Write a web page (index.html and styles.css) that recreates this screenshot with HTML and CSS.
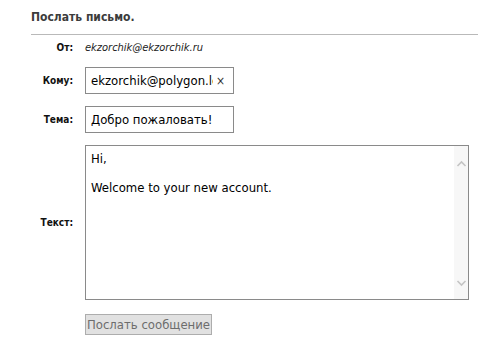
FILE: index.html
```html
<!DOCTYPE html>
<html lang="ru">
<head>
<meta charset="utf-8">
<title>Послать письмо</title>
<link rel="stylesheet" href="styles.css">
</head>
<body>
<div class="page">
  <h1 class="title">Послать письмо.</h1>
  <form class="form">
    <div class="label label-from">От:</div>
    <div class="value-from">ekzorchik@ekzorchik.ru</div>

    <label class="label">Кому:</label>
    <div class="field">
      <input class="input" type="text" value="ekzorchik@polygon.local">
      <span class="clear">×</span>
    </div>

    <label class="label">Тема:</label>
    <div class="field">
      <input class="input" type="text" value="Добро пожаловать!">
    </div>

    <label class="label">Текст:</label>
    <div class="area">
      <textarea class="textarea">Hi,

Welcome to your new account.</textarea>
      <div class="scrollbar">
        <svg class="chev" width="13" height="10" viewBox="0 0 13 10"><path d="M2.5 7 L6.5 3 L10.5 7" fill="none" stroke="#c4c4c4" stroke-width="1.6"/></svg>
        <svg class="chev" width="13" height="10" viewBox="0 0 13 10"><path d="M2.5 3 L6.5 7 L10.5 3" fill="none" stroke="#c4c4c4" stroke-width="1.6"/></svg>
      </div>
    </div>

    <div></div>
    <div class="actions">
      <button class="button" type="button" disabled>Послать сообщение</button>
    </div>
  </form>
</div>
</body>
</html>
```

FILE: styles.css
```css
* { box-sizing: border-box; }
html, body { margin: 0; padding: 0; background: #fff; }
body {
  font-family: "DejaVu Sans Condensed", "DejaVu Sans", Verdana, sans-serif;
  color: #000;
}
.page {
  padding: 11px 1px 0 31px;
}
.title {
  margin: 0;
  font-size: 12px;
  font-weight: bold;
  color: #3c3c3c;
  line-height: 13px;
  padding-bottom: 10px;
  border-bottom: 1px solid #b9b9b9;
}
.form {
  display: grid;
  grid-template-columns: 42px 384px;
  column-gap: 12px;
  row-gap: 12px;
  align-items: center;
  margin-top: 6px;
}
.label {
  font-size: 10px;
  font-weight: bold;
  text-align: right;
  color: #111;
}
.label-from { height: 14px; line-height: 14px; }
.value-from {
  font-size: 11px;
  font-style: italic;
  color: #222;
  height: 14px;
  line-height: 14px;
}
.field {
  display: flex;
  align-items: center;
  width: 149px;
  height: 27px;
  border: 1px solid #8a8a8a;
  background: #fff;
  padding: 0 5px;
}
.input {
  flex: 1;
  min-width: 0;
  border: 0;
  outline: 0;
  padding: 0;
  margin: 0;
  font-family: inherit;
  font-size: 13px;
  color: #000;
  background: transparent;
}
.clear {
  font-size: 12px;
  color: #333;
  padding: 0 3px 0 3px;
  line-height: 1;
}
.area {
  display: flex;
  width: 384px;
  height: 155px;
  border: 1px solid #8a8a8a;
  background: #fff;
}
.textarea {
  flex: 1;
  border: 0;
  outline: 0;
  resize: none;
  overflow: hidden;
  margin: 0;
  padding: 6px 5px;
  font-family: inherit;
  font-size: 13px;
  line-height: 14.5px;
  color: #000;
  background: transparent;
}
.scrollbar {
  width: 14px;
  background: #f7f7f7;
  display: flex;
  flex-direction: column;
  justify-content: space-between;
  align-items: center;
  padding: 13px 0 11px;
}
.chev { display: block; }
.actions { margin-top: 2px; }
.button {
  display: block;
  height: 21px;
  width: 127px;
  padding: 0;
  margin: 0;
  border: 1px solid #adadad;
  background: #e1e1e1;
  color: #6d6d6d;
  font-family: inherit;
  font-size: 13px;
  line-height: 19px;
  text-align: center;
}
```
